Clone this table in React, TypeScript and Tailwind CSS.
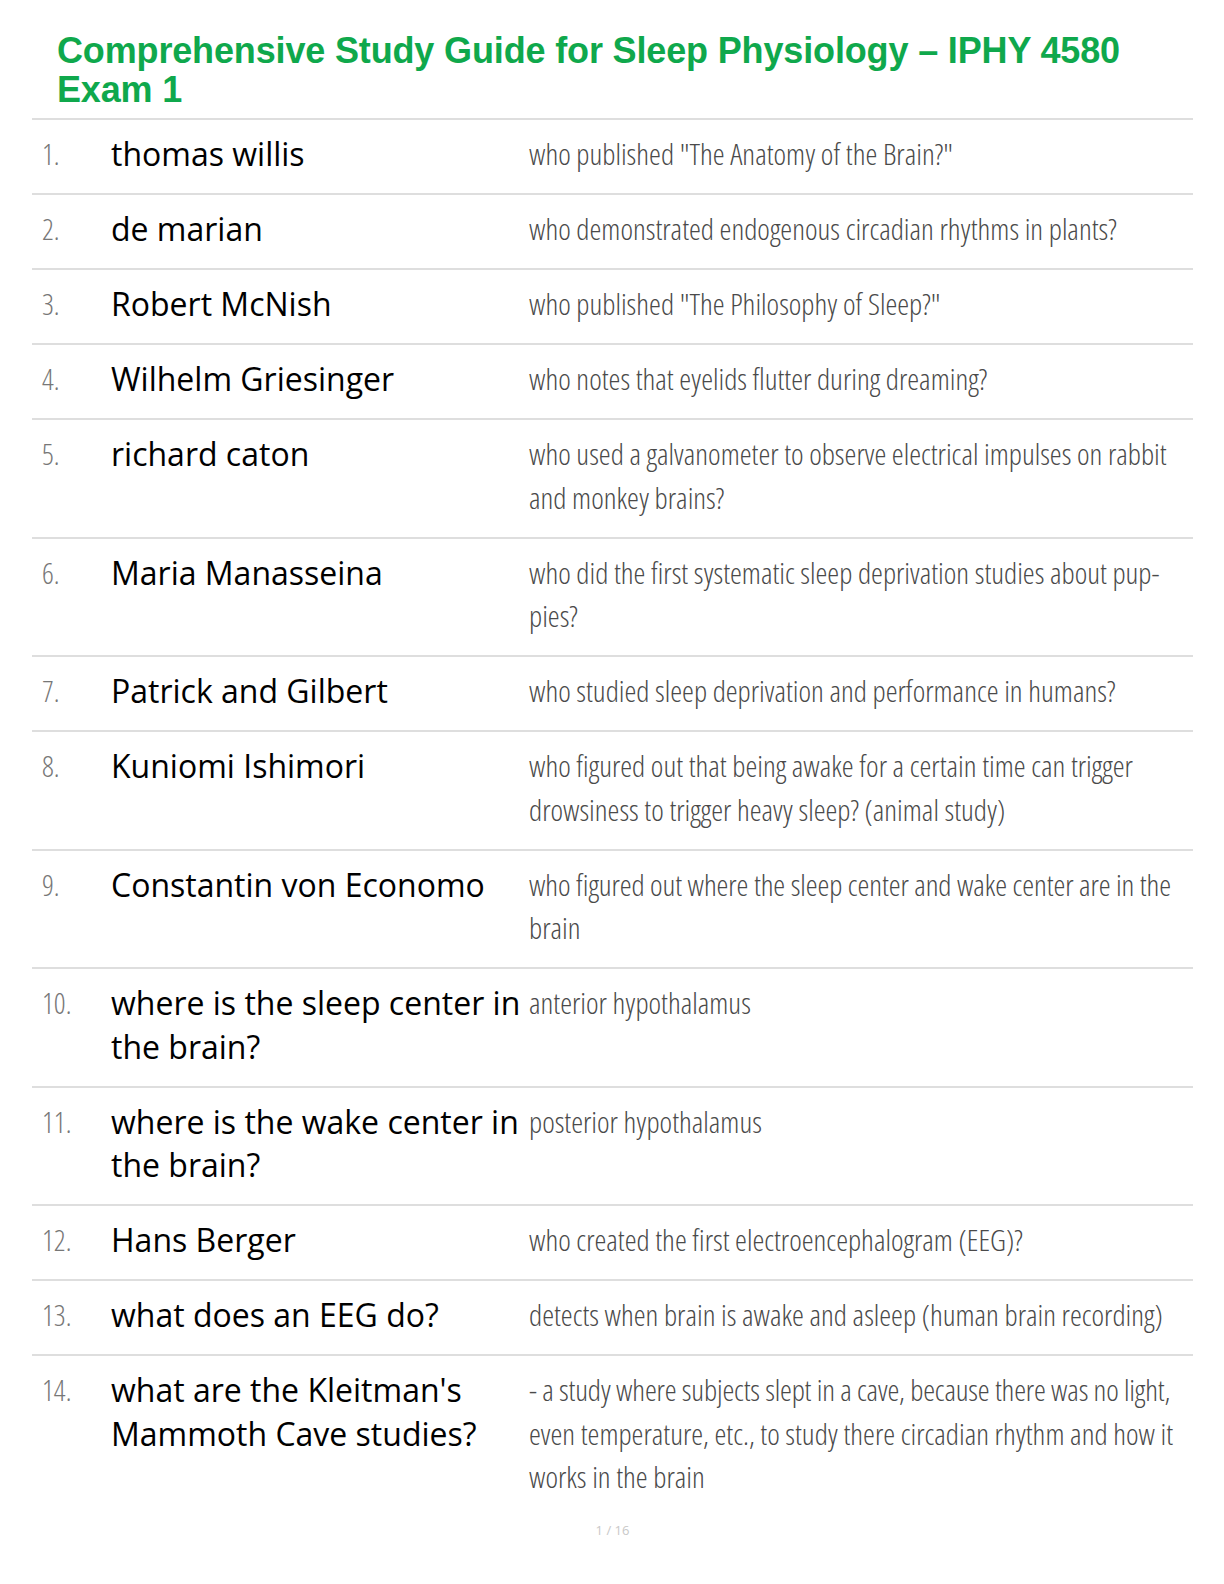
import React from "react";

type Card = { term: string; def: string[]; tight?: Record<number, string> };

// answers are broken by hand so the lines fall as in the print
const cards: Card[] = [
  { term: "thomas willis", def: ['who published "The Anatomy of the Brain?"'] },
  { term: "de marian", def: ["who demonstrated endogenous circadian rhythms in plants?"] },
  { term: "Robert McNish", def: ['who published "The Philosophy of Sleep?"'] },
  { term: "Wilhelm Griesinger", def: ["who notes that eyelids flutter during dreaming?"] },
  { term: "richard caton", def: ["who used a galvanometer to observe electrical impulses on rabbit", "and monkey brains?"] },
  { term: "Maria Manasseina", def: ["who did the first systematic sleep deprivation studies about pup-", "pies?"] },
  { term: "Patrick and Gilbert", def: ["who studied sleep deprivation and performance in humans?"] },
  {
    term: "Kuniomi Ishimori",
    def: ["who figured out that being awake for a certain time can trigger", "drowsiness to trigger heavy sleep? (animal study)"],
  },
  {
    term: "Constantin von Economo",
    def: ["who figured out where the sleep center and wake center are in the", "brain"],
    tight: { 0: "tracking-[-0.08px]" },
  },
  { term: "where is the sleep center in the brain?", def: ["anterior hypothalamus"] },
  { term: "where is the wake center in the brain?", def: ["posterior hypothalamus"] },
  { term: "Hans Berger", def: ["who created the first electroencephalogram (EEG)?"] },
  { term: "what does an EEG do?", def: ["detects when brain is awake and asleep (human brain recording)"] },
  {
    term: "what are the Kleitman's Mammoth Cave studies?",
    def: [
      "- a study where subjects slept in a cave, because there was no light,",
      "even temperature, etc., to study there circadian rhythm and how it",
      "works in the brain",
    ],
    tight: { 0: "tracking-[-0.18px]" },
  },
];

const App = () => {
  return (
    <div className="w-[1224px] min-h-[1584px] bg-white flex flex-col">
      <div className="mx-[32px] w-[1161px]">
        <h1 className="pl-[25px] pt-[31px] pb-[9px] text-[36px] leading-[39px] tracking-[-0.15px] font-bold text-[#0fa84c] font-['Liberation_Sans',Arial,sans-serif]">
          Comprehensive Study Guide for Sleep Physiology – IPHY 4580
          <br />
          Exam 1
        </h1>
        <div>
          {cards.map((c, i) => (
            <div
              key={i}
              className="grid grid-cols-[79px_418px_1fr] pt-[12px] pb-[17.5px] border-t-2 border-[#dedede] leading-[43.5px]"
            >
              <div className="pl-[10px] text-[29px] font-light text-[#777] font-['Open_Sans',sans-serif] [font-stretch:condensed]">
                {i + 1}.
              </div>
              <div className="text-[32px] text-black font-['Open_Sans',sans-serif]">{c.term}</div>
              <div className="text-[30px] font-light text-[#4a4a4a] font-['Open_Sans',sans-serif] [font-stretch:condensed]">
                {c.def.map((line, j) => (
                  <span key={j} className={"block whitespace-nowrap " + (c.tight?.[j] ?? "")}>
                    {line}
                  </span>
                ))}
              </div>
            </div>
          ))}
        </div>
        <div className="pt-[4px] text-center text-[13px] leading-[20px] text-[#c8c8c8] font-['Open_Sans',sans-serif]">1 / 16</div>
      </div>
    </div>
  );
};

export default App;
